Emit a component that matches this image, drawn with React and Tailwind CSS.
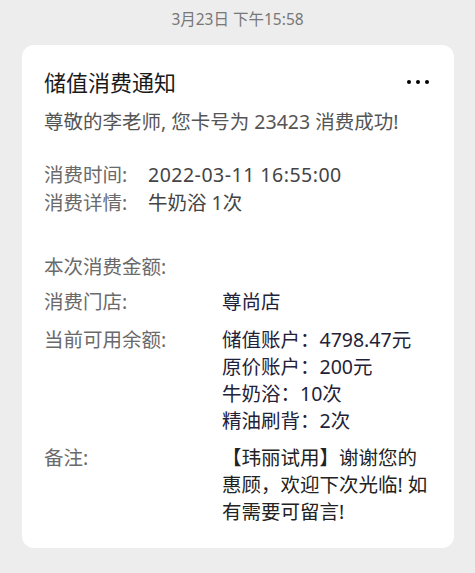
const FONT = "font-['Noto_Sans','Noto_Sans_CJK_SC',sans-serif]"

const BALANCES = ['储值账户：4798.47元', '原价账户：200元', '牛奶浴：10次', '精油刷背：2次']

function Row({ label, children, className = '' }) {
  return (
    <div className={`flex ${className}`}>
      <div className="w-[178px] shrink-0 text-[#6a6a6a]">{label}</div>
      <div className="flex-1 text-[#1f2238]">{children}</div>
    </div>
  )
}

export default function App() {
  return (
    <div className={`h-[573px] w-full bg-[#ededed] ${FONT}`}>
      {/* 时间 */}
      <div className="flex h-[40px] items-center justify-center text-[15.5px] text-[#777]">
        3月23日 下午15:58
      </div>

      {/* 卡片 */}
      <div className="mx-[22px] mr-[21px] mt-[5px] rounded-[12px] bg-white px-[22px] pb-[23px] pt-[22px]">
        <div className="flex items-center justify-between">
          <div className="text-[22px] leading-[30px] text-[#1a1a1a]">储值消费通知</div>
          <div className="mr-[3px] flex gap-[5px]">
            <span className="size-[4px] rounded-full bg-black" />
            <span className="size-[4px] rounded-full bg-black" />
            <span className="size-[4px] rounded-full bg-black" />
          </div>
        </div>

        <div className="mt-[11px] text-[19.5px] leading-[28px] text-[#555]">
          尊敬的李老师, 您卡号为 23423 消费成功!
        </div>

        <div className="mt-[25px] text-[19.5px] leading-[28px]">
          <div className="flex">
            <div className="w-[104px] shrink-0 text-[#6a6a6a]">消费时间:</div>
            <div className="tracking-[0.5px] text-[#444]">2022-03-11 16:55:00</div>
          </div>
          <div className="flex">
            <div className="w-[104px] shrink-0 text-[#6a6a6a]">消费详情:</div>
            <div className="text-[#444]">牛奶浴 1次</div>
          </div>
        </div>

        <div className="mt-[36px] text-[19.5px] leading-[28px]">
          <div className="text-[#6a6a6a]">本次消费金额:</div>
          <Row label="消费门店:" className="mt-[7px]">尊尚店</Row>
        </div>

        <div className="mt-[10px] text-[19.5px] leading-[27px]">
          <Row label="当前可用余额:">
            {BALANCES.map((b) => (
              <div key={b}>{b}</div>
            ))}
          </Row>
        </div>

        <div className="mt-[10px] text-[19.5px] leading-[27px]">
          <div className="flex">
            <div className="w-[178px] shrink-0 text-[#6a6a6a]">备注:</div>
            <div className="flex-1 text-[#222]">
              <div className="whitespace-nowrap">【玮丽试用】谢谢您的</div>
              <div className="whitespace-nowrap">惠顾，欢迎下次光临! 如</div>
              <div className="whitespace-nowrap">有需要可留言!</div>
            </div>
          </div>
        </div>
      </div>
    </div>
  )
}
